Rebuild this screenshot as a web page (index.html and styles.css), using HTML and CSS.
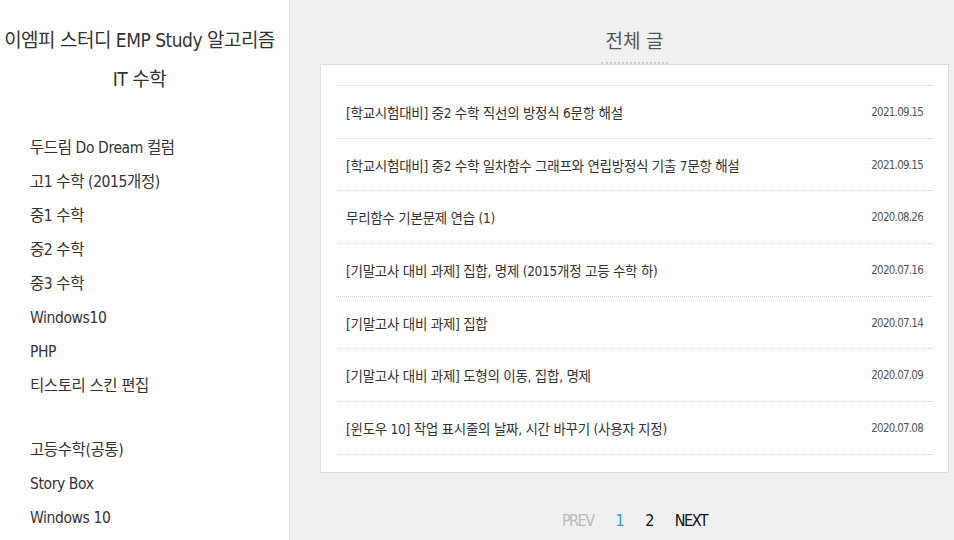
FILE: index.html
```html
<!DOCTYPE html>
<html lang="ko">

<head>
    <meta charset="UTF-8">
    <title>이엠피 스터디 EMP Study 알고리즘 IT 수학</title>
    <link rel="stylesheet" href="styles.css">
</head>

<body>
    <div id="sideBox">
        <h1 class="blogTitle">이엠피 스터디 EMP Study 알고리즘<br>IT 수학</h1>
        <ul class="menu">
            <li><a href="javascript:;">두드림 Do Dream 컬럼</a></li>
            <li><a href="javascript:;">고1 수학 (2015개정)</a></li>
            <li><a href="javascript:;">중1 수학</a></li>
            <li><a href="javascript:;">중2 수학</a></li>
            <li><a href="javascript:;">중3 수학</a></li>
            <li><a href="javascript:;">Windows10</a></li>
            <li><a href="javascript:;">PHP</a></li>
            <li><a href="javascript:;">티스토리 스킨 편집</a></li>
        </ul>
        <ul class="menu">
            <li><a href="javascript:;">고등수학(공통)</a></li>
            <li><a href="javascript:;">Story Box</a></li>
            <li><a href="javascript:;">Windows 10</a></li>
        </ul>
    </div>
    <div id="mainBox">
        <div class="pageHead">
            <h2>전체 글</h2>
        </div>
        <div class="listBox">
            <ul class="postList">
                <li><a href="javascript:;">[학교시험대비] 중2 수학 직선의 방정식 6문항 해설</a><span class="date">2021.09.15</span></li>
                <li><a href="javascript:;">[학교시험대비] 중2 수학 일차함수 그래프와 연립방정식 기출 7문항 해설</a><span class="date">2021.09.15</span></li>
                <li><a href="javascript:;">무리함수 기본문제 연습 (1)</a><span class="date">2020.08.26</span></li>
                <li><a href="javascript:;">[기말고사 대비 과제] 집합, 명제 (2015개정 고등 수학 하)</a><span class="date">2020.07.16</span></li>
                <li><a href="javascript:;">[기말고사 대비 과제] 집합</a><span class="date">2020.07.14</span></li>
                <li><a href="javascript:;">[기말고사 대비 과제] 도형의 이동, 집합, 명제</a><span class="date">2020.07.09</span></li>
                <li><a href="javascript:;">[윈도우 10] 작업 표시줄의 날짜, 시간 바꾸기 (사용자 지정)</a><span class="date">2020.07.08</span></li>
            </ul>
        </div>
        <div class="paging">
            <span class="prev">PREV</span>
            <a href="javascript:;" class="on">1</a>
            <a href="javascript:;">2</a>
            <a href="javascript:;" class="next">NEXT</a>
        </div>
    </div>
</body>

</html>
```

FILE: styles.css
```css
* {
    margin: 0;
    padding: 0;
    box-sizing: border-box;
    font-family: "DejaVu Sans Condensed", "Noto Sans CJK KR", sans-serif;
}

html,
body {
    height: 100%;
}

a {
    text-decoration: none;
    color: #333;
}

ul {
    list-style: none;
}

body {
    display: flex;
    background: #f0f0f0;
    overflow: hidden;
}

#sideBox {
    width: 290px;
    flex-shrink: 0;
    background: #fff;
    border-right: 1px solid #dedede;
}

.blogTitle {
    padding: 21px 10px 0 0;
    text-align: center;
    font-size: 19px;
    font-weight: normal;
    line-height: 39px;
    letter-spacing: -0.5px;
    color: #333;
}

.menu {
    padding: 32px 0 0 30px;
}

.menu + .menu {
    padding-top: 30px;
}

.menu li {
    height: 34px;
    line-height: 34px;
    font-size: 15.5px;
    letter-spacing: -0.4px;
}

#mainBox {
    flex: 1;
    padding: 0 5px 0 30px;
}

.pageHead {
    text-align: center;
    padding-top: 27px;
}

.pageHead h2 {
    display: inline-block;
    padding: 0 5px 7px;
    font-size: 19px;
    font-weight: normal;
    line-height: 28px;
    color: #555;
    border-bottom: 2px dotted #ccc;
}

.listBox {
    background: #fff;
    border: 1px solid #dcdcdc;
    padding: 20px 15px 17px;
}

.postList {
    border-top: 1px dotted #ccc;
}

.postList li {
    display: flex;
    justify-content: space-between;
    align-items: center;
    height: 52.7px;
    padding: 0 10px;
    border-bottom: 1px dotted #ccc;
}

.postList a {
    font-size: 13.5px;
    letter-spacing: -0.25px;
    color: #333;
}

.postList .date {
    font-size: 11.5px;
    letter-spacing: -0.75px;
    color: #555;
}

.paging {
    display: flex;
    justify-content: center;
    gap: 22px;
    padding-top: 38px;
    font-size: 16px;
    line-height: 20px;
    letter-spacing: -1.5px;
}

.paging .prev {
    color: #bbb;
}

.paging a {
    color: #111;
}

.paging .on {
    color: #3b95c9;
}
```
